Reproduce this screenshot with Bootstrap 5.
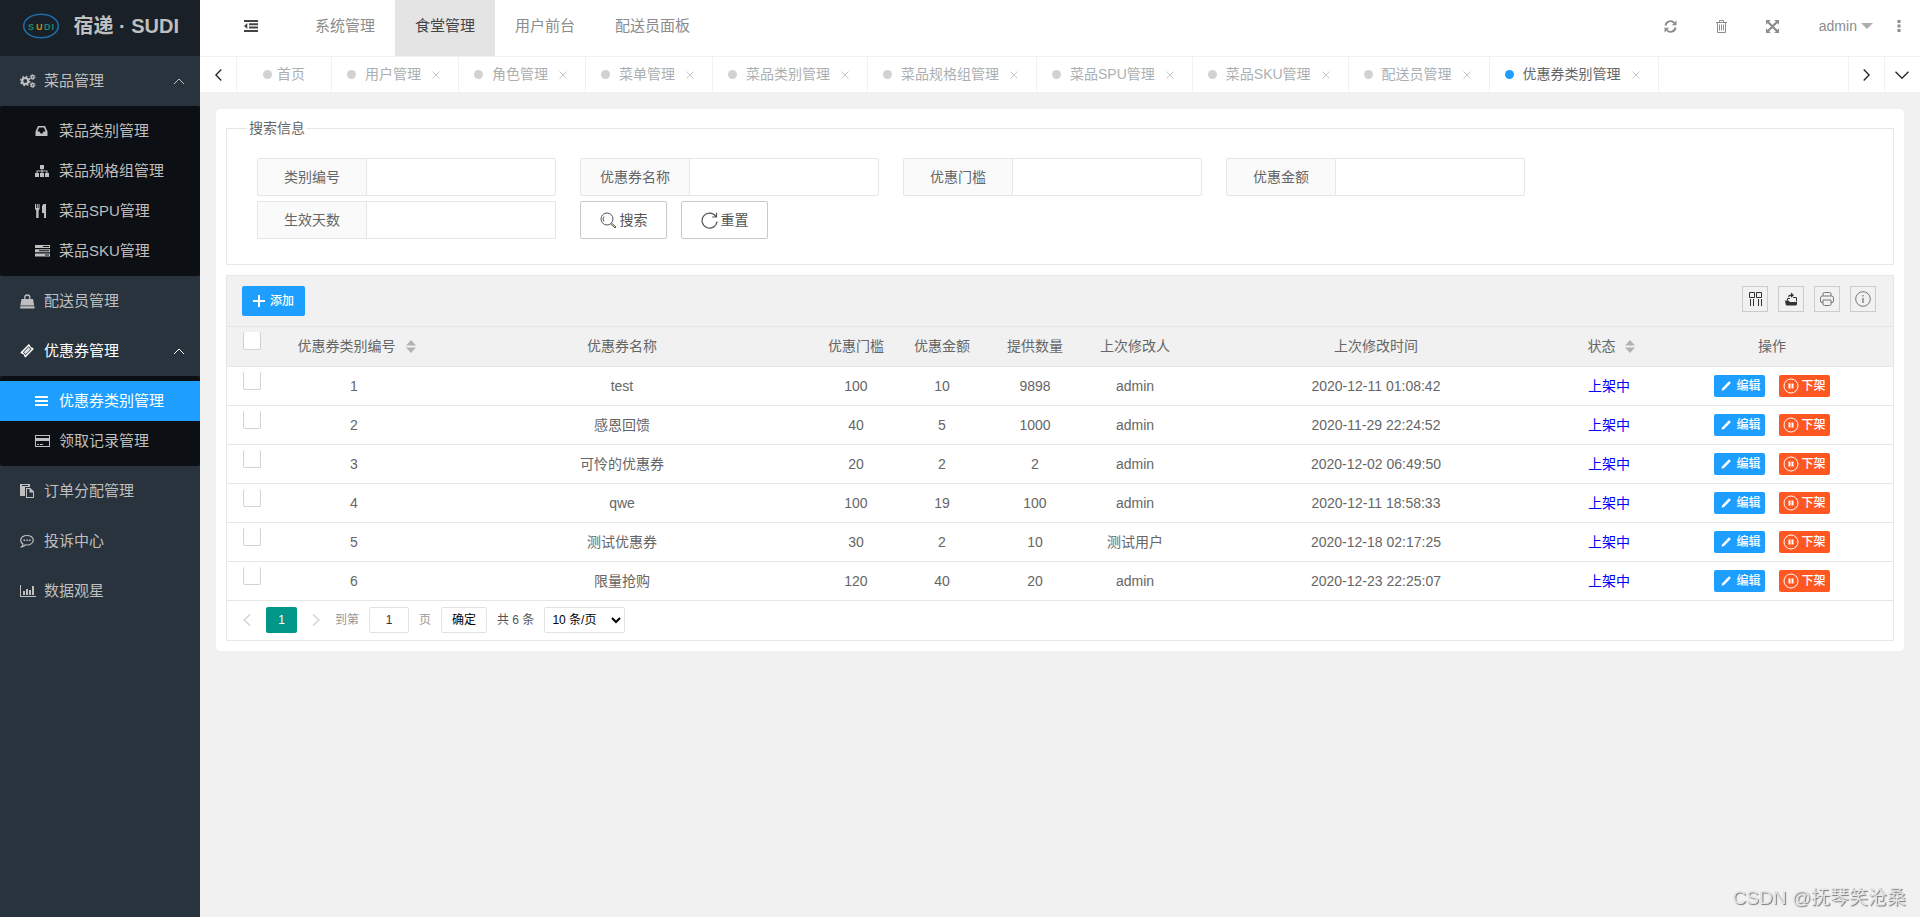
<!DOCTYPE html>
<html lang="zh-CN">
<head>
<meta charset="utf-8">
<meta name="viewport" content="width=device-width, initial-scale=1">
<title>宿递 · SUDI</title>
<link href="https://cdn.jsdelivr.net/npm/bootstrap@5.3.0/dist/css/bootstrap.min.css" rel="stylesheet">
<style>
body { font: 14px/24px "Liberation Sans", "Noto Sans CJK SC", sans-serif; background: #f1f1f1; color: #666; }
a { color: inherit; text-decoration: none; }
svg { display: block; flex: none; }
.ico { fill: currentColor; }
.ln { fill: none; stroke: currentColor; }

.side { width: 200px; background: #28333e; color: #bfbfbf; font-size: 15px; }
.brandbar { height: 56px; padding: 0 21px 4px 22px; background: #192027; color: #bfbfbf; font-size: 20px; font-weight: 700; }
.side .item { height: 50px; padding: 0 15px 0 20px; }
.side .item svg:first-child { width: 16px; margin-right: 8px; }
.side .open { color: #fff; }
.submenu { background: #0c0f13; padding: 5px 0; border-radius: 2px; }
.submenu a { height: 40px; padding-left: 35px; }
.submenu a svg { width: 16px; margin-right: 8px; }
.submenu .on { background: #1e9fff; color: #fff; }

.topbar { height: 56px; background: #fff; color: #8c8c8c; font-size: 15px; }
.topbar a { height: 56px; padding: 0 20px 4px; }
.topbar a.on { background: #e4e4e4; color: #444; }
.topbar .fold { padding: 0 37px 4px 44px; color: #444; }
.topbar .tool { padding: 0 19px 4px; }
.topbar .user { padding: 0 12px 4px 21px; font-size: 14px; }
.topbar .more { padding: 0 15px 4px 8px; }

.tabbar { height: 37px; background: #fff; border: solid #f1f1f1; border-width: 1px 0; color: #acafb1; }
.tabbar .edge { width: 36px; border: 0; background: none; color: #222; padding: 0; }
.tabbar .border-start { border-left: 1px solid #f1f1f1 !important; }
.tabbar .tab { padding: 0 14px 1px 15px; border-right: 1px solid #f1f1f1; white-space: nowrap; }
.tabbar .home { padding: 0 26px 1px; }
.tabbar .tab i { width: 9px; height: 9px; border-radius: 50%; background: #d2d2d2; margin-right: 9px; }
.tabbar .home i { margin-right: 5px; }
.tabbar .on { color: #666; }
.tabbar .on i { background: #1e9fff; }
.tabbar .tab button { border: 0; background: none; padding: 2px 4px 0; margin-left: 7px; color: #c8c8c8; }

.panel { margin: 16px; padding: 7px 10px 10px; background: #fff; border-radius: 5px; }
fieldset.find { border: 1px solid #e6e6e6; margin: 0 0 10px; padding: 18px 60px 25px 30px; min-width: 0; }
fieldset.find legend { float: none; width: auto; font-size: 14px; line-height: 24px; margin: 0 0 0 -10px; padding: 0 2px; }
.fields { gap: 5px 24px; }
.fields .input-group { width: 299px; height: 38px; flex-wrap: nowrap; }
.fields .input-group-text { width: 110px; justify-content: center; font-size: 14px; color: #666; background: #fafafa; border-color: #e6e6e6; border-radius: 2px; padding: 0; }
.fields .form-control { border-color: #e6e6e6; border-radius: 2px; font-size: 14px; }
.btn-line { width: 87px; height: 38px; border: 1px solid #c9c9c9; border-radius: 2px; background: #fff; color: #555; padding: 0; gap: 3px; }
.find-actions { gap: 14px; }

.grid { border: 1px solid #e6e6e6; }
.gridtools { height: 51px; padding: 10px 17px 10px 15px; background: #f1f1f1; border-bottom: 1px solid #e6e6e6; }
.tools { gap: 10px; }
.btn-add { width: 63px; height: 30px; border: 0; border-radius: 2px; background: #1e9fff; color: #fff; font-size: 12px; font-weight: 500; gap: 5px; padding: 0; }
.btn-tool { width: 26px; height: 26px; border: 1px solid #ccc; background: none; color: #333; padding: 0; }
.btn-tool.soft { color: #777; }
.grid table { table-layout: fixed; width: 100%; text-align: center; }
.grid th, .grid td { height: 39px; padding: 0; border-bottom: 1px solid #e6e6e6; font-weight: 400; white-space: nowrap; }
.grid thead th { background: #f1f1f1; }
.grid .pick { vertical-align: top; text-align: left; padding: 5px 0 0 16px; line-height: 0; }
.grid .pick input { appearance: none; width: 18px; height: 18px; margin: 0; background: #fff; border: 1px solid #d2d2d2; border-top: 0; border-radius: 2px; }
.grid .state { color: #00f; }
.sorter { gap: 10px; padding-left: 5px; }
.sorter svg { color: #b2b2b2; }
.row-actions { gap: 14px; }
.btn-row { width: 51px; height: 22px; border: 0; border-radius: 2px; color: #fff; font-size: 12px; line-height: 22px; font-weight: 500; padding: 0; gap: 2px; }
.btn-edit { background: #1e9fff; }
.btn-off { background: #ff5722; }

.pager { height: 39px; padding: 0 16px; font-size: 12px; color: #999; }
.pager .flip { border: 0; background: none; color: #d2d2d2; padding: 0; width: 8px; }
.pager .cur { width: 31px; height: 26px; line-height: 26px; border-radius: 2px; background: #009688; color: #fff; text-align: center; margin: 0 15px; }
.pager input { width: 40px; height: 26px; border: 1px solid #e2e2e2; border-radius: 2px; text-align: center; color: #333; padding: 0; }
.pager .go { width: 46px; height: 26px; border: 1px solid #e2e2e2; border-radius: 2px; background: #fff; color: #000; padding: 0; }
.pager select { width: 81px; height: 26px; border: 1px solid #e2e2e2; border-radius: 2px; background: #fff; color: #000; padding: 0 3px; }
.pager .jump { margin: 0 10px 0 15px; }
.pager .unit { margin: 0 10px; }
.pager .total { margin: 0 10px; color: #555; }
.stamp { position: fixed; right: 14px; bottom: 4px; font-size: 19px; line-height: 30px; color: #e4e4e4; text-shadow: 1px 1px 1px #777; }
</style>
</head>
<body>
<svg width="0" height="0" class="position-absolute" aria-hidden="true">
  <defs>
    <symbol id="i-pen" viewBox="0 0 12 12"><path d="M1.500 10.800 2.300 8.200 9 1.200 10.900 2.900 4.100 9.900Z"/></symbol>
    <symbol id="i-pause" viewBox="0 0 16 16"><circle cx="8" cy="8" r="7" fill="none" stroke="currentColor"/><path d="M5.500 5.500h2v5h-2zM8.500 5.500h2v5h-2z"/></symbol>
    <symbol id="i-sort" viewBox="0 0 10 13"><path d="M5 0 10 5.500H0zM5 13 0 7.500h10z"/></symbol>
    <symbol id="i-x" viewBox="0 0 8 8"><path d="M.5.500l7 7M7.500.500l-7 7" fill="none" stroke="currentColor"/></symbol>
    <symbol id="i-up" viewBox="0 0 12 7"><path d="M1 6l5-5 5 5" fill="none" stroke="currentColor"/></symbol>
  </defs>
</svg>
<div class="d-flex min-vh-100">
  <aside class="side flex-shrink-0">
    <div class="brandbar d-flex align-items-center justify-content-between">
      <svg width="38" height="26" viewBox="0 0 38 26"><ellipse cx="19" cy="13" rx="17.300" ry="11.800" fill="none" stroke="#1d6fae" stroke-width="1.500"/><g font-family="Liberation Sans" font-weight="700" font-size="9"><text x="6" y="16.500" fill="#1c8a76">S</text><text x="14" y="16.500" fill="#c98f12">U</text><text x="22" y="16.500" fill="#1c8a76">D</text><text x="29.500" y="16.500" fill="#1c8a76">I</text></g></svg>
      <span>宿递 · SUDI</span>
    </div>
    <nav>
      <a href="#" class="item d-flex align-items-center">
        <svg class="ico" height="14" viewBox="0 0 16 14"><circle cx="5.200" cy="7" r="3" fill="none" stroke="currentColor" stroke-width="2.200"/><circle cx="5.200" cy="7" r="4.500" fill="none" stroke="currentColor" stroke-width="1.600" stroke-dasharray="1.770 1.764"/><circle cx="12.600" cy="3" r="1.500" fill="none" stroke="currentColor" stroke-width="1.400"/><circle cx="12.600" cy="3" r="2.500" fill="none" stroke="currentColor" stroke-dasharray="1.300 1.300"/><circle cx="12.600" cy="11" r="1.500" fill="none" stroke="currentColor" stroke-width="1.400"/><circle cx="12.600" cy="11" r="2.500" fill="none" stroke="currentColor" stroke-dasharray="1.300 1.300"/></svg>
        <span class="flex-grow-1">菜品管理</span><svg width="12" height="7"><use href="#i-up"/></svg></a>
      <div class="submenu">
        <a href="#" class="d-flex align-items-center"><svg class="ico" height="12" viewBox="0 0 16 12"><path fill-rule="evenodd" d="M3 1h7l2.500 5.500V11H.5V6.500zM4 2.500 2.500 6.500H4.500L5.500 8.500h2L8.500 6.500h2L9 2.500z"/></svg>菜品类别管理</a>
        <a href="#" class="d-flex align-items-center"><svg class="ico" height="12" viewBox="0 0 16 12"><path d="M5 0h4v4H7.500v1.500h5V8H14v4h-4V8h1.500V6.500h-4V8H9v4H5V8h1.500V6.500h-4V8H4v4H0V8h1.500V5.500h5V4H5z"/></svg>菜品规格组管理</a>
        <a href="#" class="d-flex align-items-center"><svg class="ico" height="14" viewBox="0 0 16 14"><path d="M0 0h1v4h.8V0h1v4h.8V0h1v5l-1 1.500V14H1.200V6.500L0 5zM7 3Q7 0 9.500 0H11v14H9V9H7z"/></svg>菜品SPU管理</a>
        <a href="#" class="d-flex align-items-center"><svg class="ico" height="12" viewBox="0 0 16 12"><path fill-rule="evenodd" d="M0 0h15v3H0zM0 4.300h15v3H0zM0 8.600h15v3H0zM8 1h6v1H8zM4 5.300h10v1H4zM10 9.600h4v1h-4z"/></svg>菜品SKU管理</a>
      </div>
      <a href="#" class="item d-flex align-items-center"><svg class="ico" height="15" viewBox="0 0 16 15"><path d="M1.500 5h11.500l1.200 6.500H.3zM.2 12.200h14.300V14.500H.2z"/><path class="ln" stroke-width="1.300" d="M4.800 6V3.500a2.500 2.500 0 0 1 5 0V6"/></svg><span>配送员管理</span></a>
      <a href="#" class="item open d-flex align-items-center"><svg class="ico" height="14" viewBox="0 0 16 14"><path fill-rule="evenodd" d="M8.800 0 10.300 1.400a1.600 1.600 0 0 0 2 2L13.800 5 5.500 13.500 4 12.100a1.600 1.600 0 0 0-2-2L.4 8.600zM8.700 2.200 2.900 8.200 5.600 11.200 11.500 5.200z"/><path d="M8.700 3.200 10.500 5.200 5.600 10.200 3.900 8.200z" opacity=".85"/></svg><span class="flex-grow-1">优惠券管理</span><svg width="12" height="7"><use href="#i-up"/></svg></a>
      <div class="submenu">
        <a href="#" class="on d-flex align-items-center"><svg class="ico" height="10" viewBox="0 0 16 10"><path d="M0 0h13v2H0zM0 4h13v2H0zM0 8h13v2H0z"/></svg>优惠券类别管理</a>
        <a href="#" class="d-flex align-items-center"><svg class="ico" height="12" viewBox="0 0 16 12"><path fill-rule="evenodd" d="M0 0h15v12H0zM1 1v2h13V1zM1 6v5h13V6zM2 9h2v1H2zM5 9h3v1H5z"/></svg>领取记录管理</a>
      </div>
      <a href="#" class="item d-flex align-items-center"><svg class="ico" height="14" viewBox="0 0 16 14"><path fill-rule="evenodd" d="M0 0h10v3H5v9H0zM2 1v1h6V1z"/><path fill-rule="evenodd" d="M6 4h4.500L14 7.500V14H6zM7 5v8h6V8.500H9.500V5z"/></svg><span>订单分配管理</span></a>
      <a href="#" class="item d-flex align-items-center"><svg class="ico" height="14" viewBox="0 0 16 14"><path class="ln" stroke-width="1.200" d="M7 1.500c3.500 0 6.300 2 6.300 4.700S10.500 11 7 11q-1 0-1.800-.2Q4 12.600 1.600 12.800 3 11.500 3 10 .700 8.600.7 6.200C.7 3.500 3.500 1.500 7 1.500z"/><path d="M3.500 5.500h1.600V7H3.500zM6.200 5.500h1.600V7H6.200zM8.900 5.500h1.600V7H8.900z"/></svg><span>投诉中心</span></a>
      <a href="#" class="item d-flex align-items-center"><svg class="ico" height="12" viewBox="0 0 16 12"><path d="M0 0h1v11h15v1H0zM3 6h2v4H3zM6 4h2v6H6zM9 5h2v5H9zM12 1h2v9h-2z"/></svg><span>数据观星</span></a>
    </nav>
  </aside>

  <main class="flex-grow-1" style="min-width:0">
    <header class="topbar d-flex">
      <a href="#" class="fold d-flex align-items-center" aria-label="收起菜单"><svg class="ico" width="14" height="12" viewBox="0 0 14 12"><path d="M0 0h14v2H0zM5 3.300h9v2H5zM5 6.600h9v2H5zM0 10h14v2H0zM0 6 3.300 3v6z"/></svg></a>
      <a href="#" class="d-flex align-items-center">系统管理</a>
      <a href="#" class="on d-flex align-items-center">食堂管理</a>
      <a href="#" class="d-flex align-items-center">用户前台</a>
      <a href="#" class="d-flex align-items-center me-auto">配送员面板</a>
      <a href="#" class="tool d-flex align-items-center" aria-label="刷新"><svg class="ico" width="13" height="13" viewBox="0 0 13 13"><path class="ln" stroke-width="1.900" d="M1.500 5.500A5 5 0 0 1 10.300 3M11.500 7.500A5 5 0 0 1 2.700 10"/><path d="M12.500.600v4.700H7.800zM.5 12.400V7.700h4.700z"/></svg></a>
      <a href="#" class="tool d-flex align-items-center" aria-label="清理"><svg class="ln" width="13" height="13" viewBox="0 0 13 13"><path d="M1 2.500h11M4.500 2.500V.5h4v2M2.500 2.500v10h8v-10M4.500 4.500v6M6.500 4.500v6M8.500 4.500v6"/></svg></a>
      <a href="#" class="tool d-flex align-items-center" aria-label="全屏"><svg class="ico" width="13" height="13" viewBox="0 0 13 13"><path d="M0 0h4.800L0 4.800zM13 0v4.800L8.200 0zM0 13V8.200L4.800 13zM13 13H8.200L13 8.200z"/><path class="ln" stroke-width="2.200" d="M2 2l9 9M11 2l-9 9"/></svg></a>
      <a href="#" class="user d-flex align-items-center"><span class="me-1">admin</span><svg class="ico" width="12" height="6" viewBox="0 0 12 6" opacity=".7"><path d="M0 0h12L6 6z"/></svg></a>
      <a href="#" class="more d-flex align-items-center" aria-label="更多"><svg class="ico" width="12" height="12" viewBox="0 0 12 12"><path d="M4.500 0h3v3h-3zM4.500 4.500h3v3h-3zM4.500 9h3v3h-3z"/></svg></a>
    </header>

    <div class="tabbar d-flex">
      <button class="edge d-flex align-items-center justify-content-center" aria-label="向左"><svg class="ln" width="7" height="12" viewBox="0 0 7 12" stroke-width="1.300"><path d="M6.300.5.900 6l5.400 5.500"/></svg></button>
      <a href="#" class="tab home d-flex align-items-center border-start"><i></i>首页</a>
      <div class="tab d-flex align-items-center"><i></i><a href="#">用户管理</a><button aria-label="关闭"><svg width="8" height="8"><use href="#i-x"/></svg></button></div>
      <div class="tab d-flex align-items-center"><i></i><a href="#">角色管理</a><button aria-label="关闭"><svg width="8" height="8"><use href="#i-x"/></svg></button></div>
      <div class="tab d-flex align-items-center"><i></i><a href="#">菜单管理</a><button aria-label="关闭"><svg width="8" height="8"><use href="#i-x"/></svg></button></div>
      <div class="tab d-flex align-items-center"><i></i><a href="#">菜品类别管理</a><button aria-label="关闭"><svg width="8" height="8"><use href="#i-x"/></svg></button></div>
      <div class="tab d-flex align-items-center"><i></i><a href="#">菜品规格组管理</a><button aria-label="关闭"><svg width="8" height="8"><use href="#i-x"/></svg></button></div>
      <div class="tab d-flex align-items-center"><i></i><a href="#">菜品SPU管理</a><button aria-label="关闭"><svg width="8" height="8"><use href="#i-x"/></svg></button></div>
      <div class="tab d-flex align-items-center"><i></i><a href="#">菜品SKU管理</a><button aria-label="关闭"><svg width="8" height="8"><use href="#i-x"/></svg></button></div>
      <div class="tab d-flex align-items-center"><i></i><a href="#">配送员管理</a><button aria-label="关闭"><svg width="8" height="8"><use href="#i-x"/></svg></button></div>
      <div class="tab on d-flex align-items-center me-auto"><i></i><a href="#">优惠券类别管理</a><button aria-label="关闭"><svg width="8" height="8"><use href="#i-x"/></svg></button></div>
      <button class="edge d-flex align-items-center justify-content-center border-start" aria-label="向右"><svg class="ln" width="7" height="12" viewBox="0 0 7 12" stroke-width="1.300"><path d="M.7.500 6.100 6 .7 11.500"/></svg></button>
      <button class="edge d-flex align-items-center justify-content-center border-start" aria-label="标签操作"><svg class="ln" width="14" height="8" viewBox="0 0 14 8" stroke-width="1.300"><path d="M.5.700 7 7.200 13.500.7"/></svg></button>
    </div>

    <section class="panel">
      <fieldset class="find">
        <legend>搜索信息</legend>
        <form class="fields d-flex flex-wrap">
          <div class="input-group"><label class="input-group-text" for="f1">类别编号</label><input id="f1" class="form-control"></div>
          <div class="input-group"><label class="input-group-text" for="f2">优惠券名称</label><input id="f2" class="form-control"></div>
          <div class="input-group"><label class="input-group-text" for="f3">优惠门槛</label><input id="f3" class="form-control"></div>
          <div class="input-group"><label class="input-group-text" for="f4">优惠金额</label><input id="f4" class="form-control"></div>
          <div class="input-group"><label class="input-group-text" for="f5">生效天数</label><input id="f5" class="form-control"></div>
          <div class="d-flex find-actions">
            <button type="button" class="btn-line d-flex align-items-center justify-content-center"><svg class="ln" width="17" height="17" viewBox="0 0 17 17"><circle cx="7" cy="7" r="6"/><path d="M4 9.500a4 4 0 0 1 0-5M11.500 11l4.500 4-1 1-4.500-4.200"/></svg>搜索</button>
            <button type="reset" class="btn-line d-flex align-items-center justify-content-center"><svg class="ln" width="17" height="17" viewBox="0 0 17 17" stroke-width="1.200"><path d="M14.800 4.500A7.500 7.500 0 1 0 16 9.500M15.500.800v4.200h-4.300"/></svg>重置</button>
          </div>
        </form>
      </fieldset>

      <div class="grid">
        <div class="gridtools d-flex">
          <button class="btn-add d-flex align-items-center justify-content-center me-auto"><svg class="ln" width="12" height="12" viewBox="0 0 12 12" stroke-width="2"><path d="M6 0v12M0 6h12"/></svg>添加</button>
          <div class="d-flex tools">
            <button class="btn-tool d-flex align-items-center justify-content-center" aria-label="筛选列"><svg class="ln" width="14" height="14" viewBox="0 0 14 14"><path d="M1.500.500h5v5h-5zM8.500.500h5v5h-5zM2.500 7v7M5.500 7v7M10.500 7v7M13.500 7v7"/></svg></button>
            <button class="btn-tool d-flex align-items-center justify-content-center" aria-label="导出"><svg class="ico" width="14" height="14" viewBox="0 0 14 14"><path d="M1 8.500h3.500L6 10h7v2.500l-1 1H2.500l-.8-1z"/><path d="M4 5.500Q4 2.500 7 2.500V.500l3 2.700-3 2.600V4Q5 4 4 5.500z"/><path class="ln" d="M3.500 8.500V6.500H6M9 5.500h3.500v4"/></svg></button>
            <button class="btn-tool soft d-flex align-items-center justify-content-center" aria-label="打印"><svg class="ln" width="14" height="14" viewBox="0 0 14 14"><path d="M3 4V2q0-1.500 1.500-1.500h5Q11 .5 11 2v2M3 10.500H2Q.5 10.500.5 9V6Q.5 4 2.500 4h9q2 0 2 2v3q0 1.500-1.500 1.500H11M3 8h8v4q0 1.500-1.500 1.500h-5Q3 13.500 3 12z"/></svg></button>
            <button class="btn-tool soft d-flex align-items-center justify-content-center" aria-label="提示"><svg class="ln" width="16" height="16" viewBox="0 0 16 16"><circle cx="8" cy="8" r="7.300"/><path stroke-width="1.300" d="M8 4v1.500M8 7v5"/></svg></button>
          </div>
        </div>
        <table>
          <colgroup><col width="50"><col width="154"><col><col width="86"><col width="86"><col width="100"><col width="100"><col><col width="84"><col width="242"></colgroup>
          <thead><tr>
            <th class="pick"><input type="checkbox" aria-label="全选"></th>
            <th><span class="d-inline-flex align-items-center sorter">优惠券类别编号<svg class="ico" width="10" height="13"><use href="#i-sort"/></svg></span></th>
            <th>优惠券名称</th><th>优惠门槛</th><th>优惠金额</th><th>提供数量</th><th>上次修改人</th><th>上次修改时间</th>
            <th><span class="d-inline-flex align-items-center sorter">状态<svg class="ico" width="10" height="13"><use href="#i-sort"/></svg></span></th>
            <th>操作</th>
          </tr></thead>
          <tbody id="rows"></tbody>
        </table>
        <div class="pager d-flex align-items-center">
          <button class="flip" aria-label="上一页"><svg class="ln" width="8" height="12" viewBox="0 0 8 12" stroke-width="1.500"><path d="M7 .5 1 6l6 5.500"/></svg></button>
          <span class="cur">1</span>
          <button class="flip" aria-label="下一页"><svg class="ln" width="8" height="12" viewBox="0 0 8 12" stroke-width="1.500"><path d="M1 .5 7 6l-6 5.500"/></svg></button>
          <label class="jump" for="pg">到第</label><input id="pg" value="1"><span class="unit">页</span>
          <button class="go">确定</button>
          <span class="total">共 6 条</span>
          <select aria-label="每页条数"><option>10 条/页</option></select>
        </div>
      </div>
    </section>
  </main>
</div>
<div class="stamp">CSDN @抚琴笑沧桑</div>
<script>
const data = [
  ['test', 100, 10, 9898, 'admin', '2020-12-11 01:08:42'],
  ['感恩回馈', 40, 5, 1000, 'admin', '2020-11-29 22:24:52'],
  ['可怜的优惠券', 20, 2, 2, 'admin', '2020-12-02 06:49:50'],
  ['qwe', 100, 19, 100, 'admin', '2020-12-11 18:58:33'],
  ['测试优惠券', 30, 2, 10, '测试用户', '2020-12-18 02:17:25'],
  ['限量抢购', 120, 40, 20, 'admin', '2020-12-23 22:25:07']
];
document.getElementById('rows').innerHTML = data.map((r, i) => `<tr>
  <td class="pick"><input type="checkbox" aria-label="选择第 ${i + 1} 行"></td>
  <td>${i + 1}</td>${r.map(v => `<td>${v}</td>`).join('')}<td class="state">上架中</td>
  <td><div class="d-flex justify-content-center row-actions">
    <button class="btn-row btn-edit d-flex align-items-center justify-content-center"><svg class="ico" width="16" height="12"><use href="#i-pen"/></svg>编辑</button>
    <button class="btn-row btn-off d-flex align-items-center justify-content-center"><svg class="ico" width="16" height="16"><use href="#i-pause"/></svg>下架</button>
  </div></td></tr>`).join('');
</script>
<script src="https://cdn.jsdelivr.net/npm/bootstrap@5.3.0/dist/js/bootstrap.bundle.min.js"></script>
</body>
</html>
